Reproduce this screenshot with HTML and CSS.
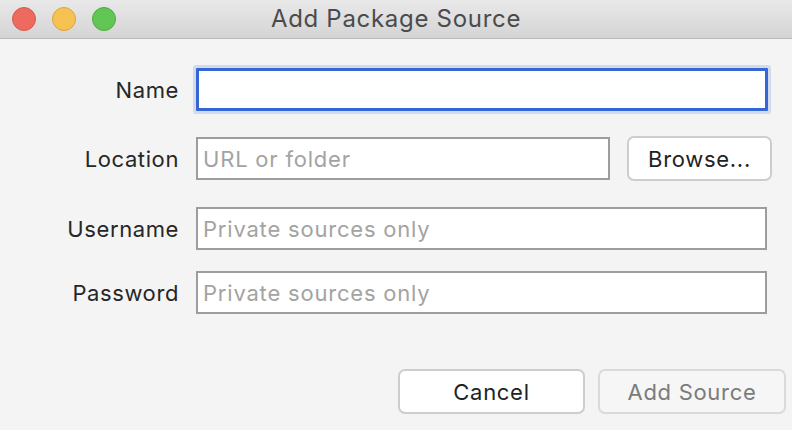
FILE: index.html
```html
<!DOCTYPE html>
<html>
<head>
<meta charset="utf-8">
<link rel="stylesheet" href="styles.css">
</head>
<body>
<div class="window">
  <div class="titlebar">
    <div class="lights">
      <span class="light red"></span>
      <span class="light yellow"></span>
      <span class="light green"></span>
    </div>
    <div class="title">Add Package Source</div>
  </div>
  <div class="content">
    <div class="row row-name">
      <label class="label">Name</label>
      <div class="field focused wide"></div>
    </div>
    <div class="row row-location">
      <label class="label">Location</label>
      <div class="field location"><span class="ph">URL or folder</span></div>
      <button class="btn browse">Browse...</button>
    </div>
    <div class="row row-user">
      <label class="label">Username</label>
      <div class="field wide2"><span class="ph">Private sources only</span></div>
    </div>
    <div class="row row-pass">
      <label class="label">Password</label>
      <div class="field wide2"><span class="ph">Private sources only</span></div>
    </div>
    <div class="actions">
      <button class="btn cancel">Cancel</button>
      <button class="btn add" disabled>Add Source</button>
    </div>
  </div>
</div>
</body>
</html>
```
FILE: styles.css
```css
html, body {
  margin: 0;
  padding: 0;
}
body {
  width: 792px;
  height: 430px;
  overflow: hidden;
  background: #f4f4f4;
  font-family: Inter, "Liberation Sans", Arial, sans-serif;
}
.window {
  width: 792px;
  height: 430px;
  display: flex;
  flex-direction: column;
}
.titlebar {
  height: 38px;
  border-bottom: 1px solid #b9b9b9;
  background: linear-gradient(#e9e9e9, #d4d4d4);
  display: flex;
  align-items: center;
  position: relative;
}
.lights {
  display: flex;
  gap: 16px;
  padding-left: 12px;
}
.light {
  width: 24px;
  height: 24px;
  border-radius: 50%;
  box-sizing: border-box;
}
.red { background: #ee6a5f; border: 1px solid #d55a50; }
.yellow { background: #f6c352; border: 1px solid #dca43d; }
.green { background: #62c655; border: 1px solid #4fa944; }
.title {
  position: absolute;
  left: 0;
  right: 0;
  top: 0;
  height: 38px;
  line-height: 38px;
  text-align: center;
  font-size: 24px;
  letter-spacing: 0.7px;
  color: #4b4b4b;
  pointer-events: none;
}
.content {
  display: flex;
  flex-direction: column;
  padding-left: 40px;
}
.row {
  display: flex;
  align-items: center;
}
.row-name { margin-top: 29px; }
.row-location { margin-top: 25px; }
.row-user { margin-top: 26px; }
.row-pass { margin-top: 21px; }
.label {
  width: 139px;
  text-align: right;
  padding-right: 17px;
  font-size: 22px;
  letter-spacing: 0.6px;
  color: #262626;
  box-sizing: content-box;
}
.field {
  height: 43px;
  box-sizing: border-box;
  border: 2px solid #9d9d9d;
  background: #fff;
  display: flex;
  align-items: center;
  padding-left: 5px;
}
.field.focused {
  border: 3px solid #3566d6;
  box-shadow: 0 0 0 3px #d2dbee;
  border-radius: 1px;
}
.wide { width: 572px; }
.wide2 { width: 571px; }
.location { width: 414px; }
.ph {
  font-size: 22px;
  letter-spacing: 0.8px;
  color: #a3a3a3;
}
.btn {
  font-family: Inter, "Liberation Sans", Arial, sans-serif;
  font-size: 22px;
  letter-spacing: 0.7px;
  color: #222;
  background: #fff;
  border: 2px solid #cdcdcd;
  border-radius: 7px;
  box-sizing: border-box;
  padding: 0;
}
.browse {
  width: 145px;
  height: 45px;
  margin-left: 17px;
}
.actions {
  display: flex;
  justify-content: flex-end;
  gap: 13px;
  margin-top: 55px;
  padding-right: 6px;
}
.cancel {
  width: 187px;
  height: 45px;
}
.add {
  width: 188px;
  height: 45px;
  background: #f6f6f6;
  border-color: #dadada;
  color: #7b7b7b;
}
```
